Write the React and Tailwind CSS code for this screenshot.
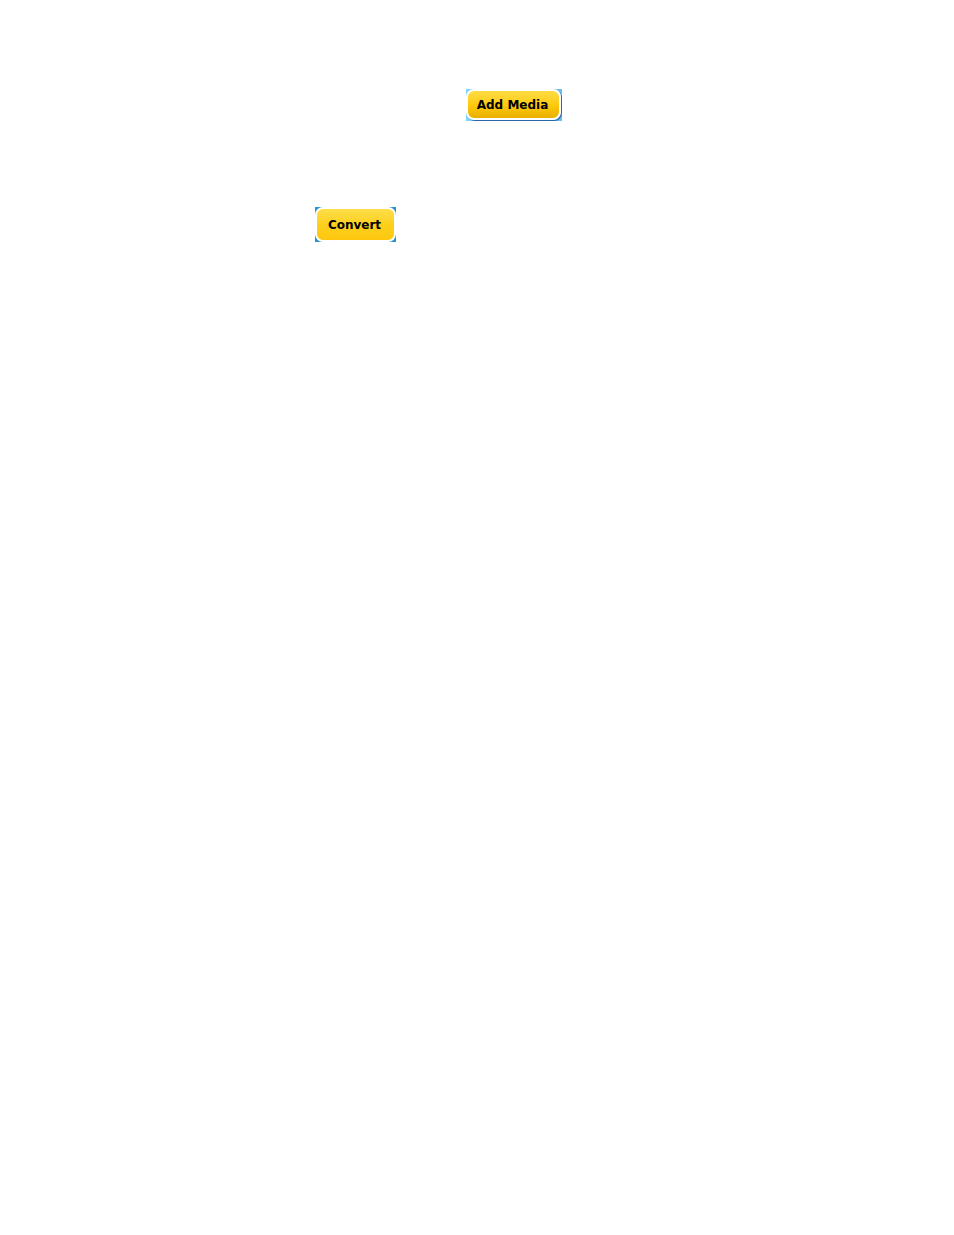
const toolbarFont = "font-['DejaVu_Sans',Verdana,sans-serif] font-bold text-xs text-black";

function AddMediaButton() {
    return (
        <div className="w-24 h-8 pr-px pb-px overflow-hidden bg-linear-to-r from-[#7fd4fa] to-[#6bbdea]">
            <button
                type="button"
                className={`${toolbarFont} w-full h-full rounded-lg border-2 border-white bg-linear-to-b from-[#ffe047] via-[#fdcb0c] to-[#e6ac00] bg-origin-border pr-0.5 whitespace-nowrap shadow-[1px_1px_0_#2d66a8] hover:cursor-pointer`}
            >
                Add Media
            </button>
        </div>
    );
}

function ConvertButton() {
    return (
        <div className="w-[81px] h-[35px] bg-[#2b93cc]">
            <button
                type="button"
                className={`${toolbarFont} w-full h-full rounded-lg border-2 border-white bg-linear-to-b from-[#ffe04c] via-[#fdd01c] to-[#fdc50b] bg-origin-border pr-0.5 whitespace-nowrap hover:cursor-pointer`}
            >
                Convert
            </button>
        </div>
    );
}

function App() {
    return (
        <main className="min-h-screen w-full bg-white pt-[89px]">
            <div className="pl-[466px]">
                <AddMediaButton />
            </div>
            <div className="mt-[86px] pl-[315px]">
                <ConvertButton />
            </div>
        </main>
    );
}

export default App;
